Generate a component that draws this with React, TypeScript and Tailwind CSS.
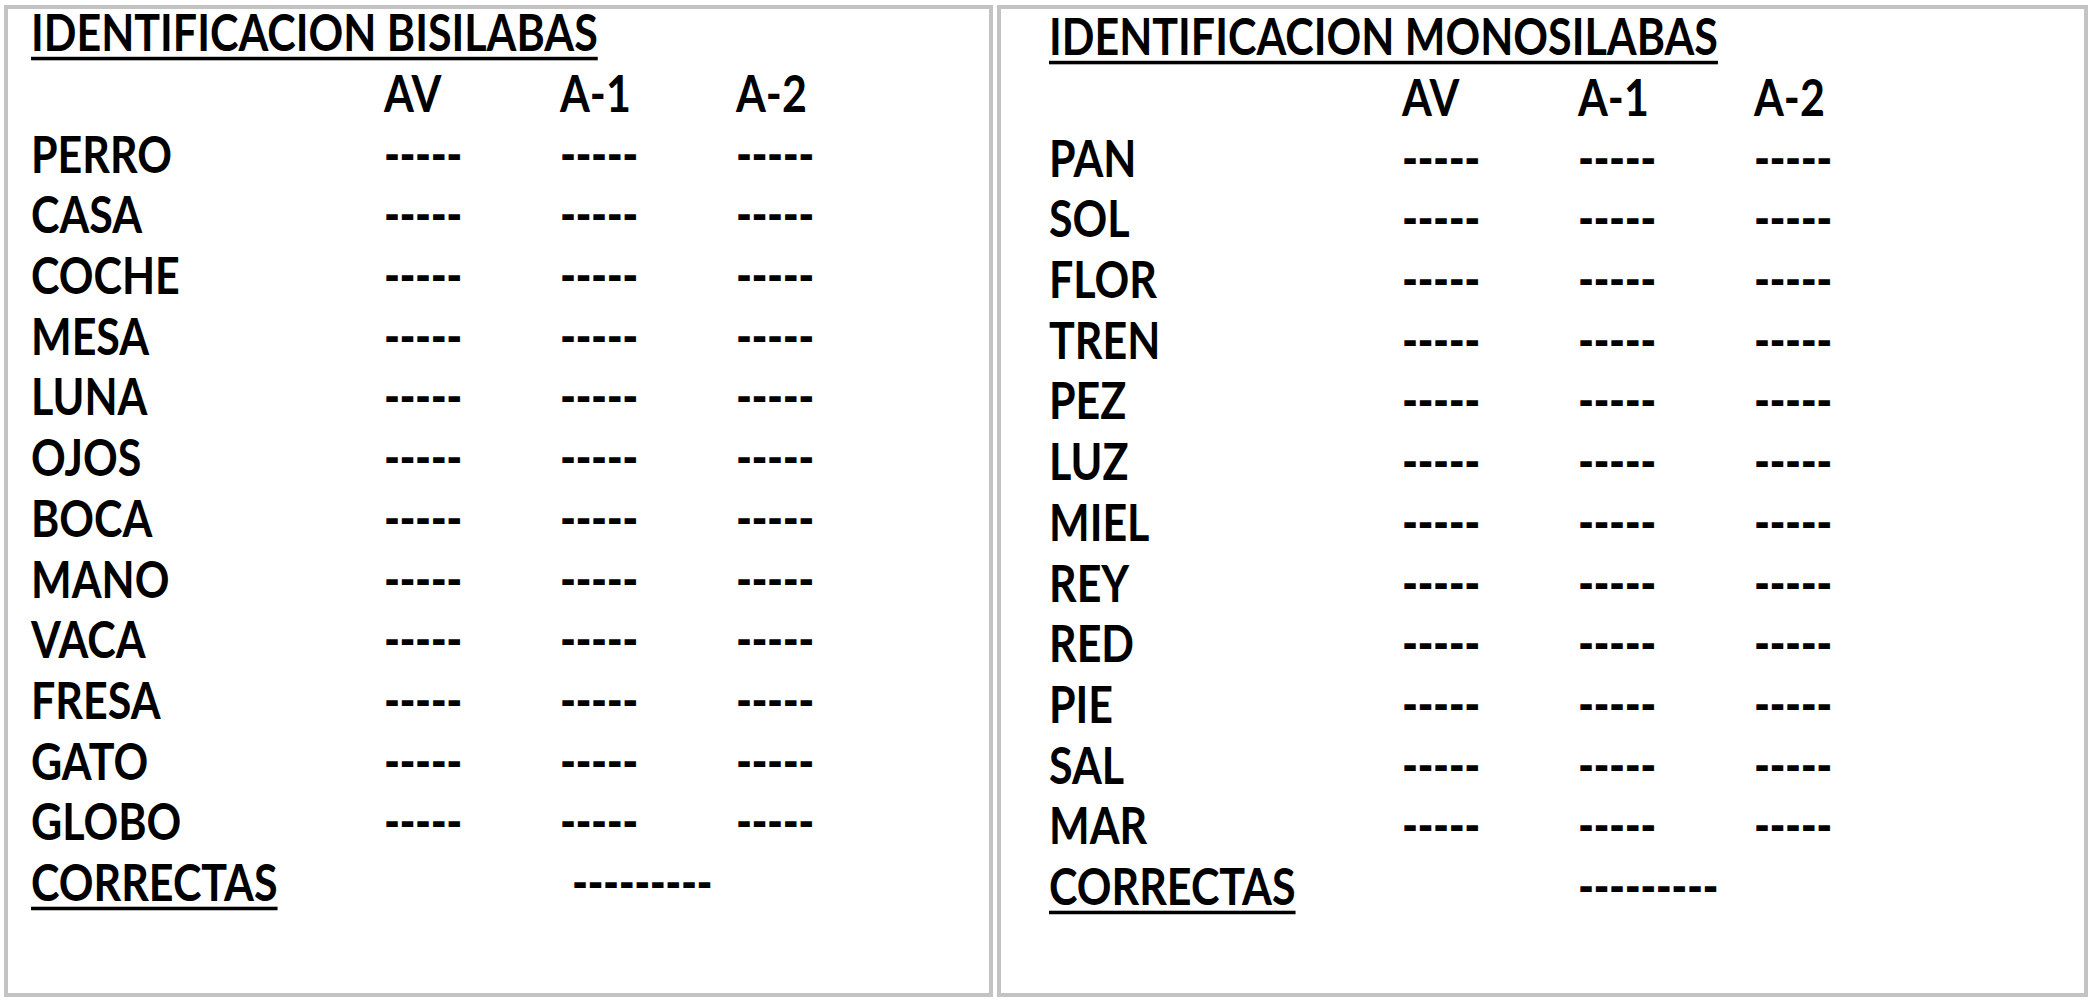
import React from "react";

const left = ["PERRO","CASA","COCHE","MESA","LUNA","OJOS","BOCA","MANO","VACA","FRESA","GATO","GLOBO"];
const right = ["PAN","SOL","FLOR","TREN","PEZ","LUZ","MIEL","REY","RED","PIE","SAL","MAR"];

function T({ children, className = "" }: { children: React.ReactNode; className?: string }) {
  return <span className={`inline-block scale-y-[1.18] origin-center ${className}`}>{children}</span>;
}

function D({ n }: { n: number }) {
  return <T className="font-black tracking-[-0.5px]">{"-".repeat(n)}</T>;
}

function Panel({ title, words, className, corrOffset }: { title: string; words: string[]; className: string; corrOffset: string }) {
  return (
    <div className={`border-4 border-[#c3c3c3] h-[992px] ${className}`}>
      <div className="h-[54px] leading-[46px]">
        <T className="underline decoration-[2.5px] underline-offset-[5px]">{title}</T>
      </div>
      <div className="grid grid-cols-[353px_176px_176px_176px] auto-rows-[60.7px] leading-[60.7px]">
        <div></div>
        <div><T>AV</T></div>
        <div><T>A-1</T></div>
        <div><T>A-2</T></div>
        {words.map((w) => (
          <React.Fragment key={w}>
            <div><T>{w}</T></div>
            <div><D n={5} /></div>
            <div><D n={5} /></div>
            <div><D n={5} /></div>
          </React.Fragment>
        ))}
        <div><T className="underline decoration-[2.5px] underline-offset-[5px]">CORRECTAS</T></div>
        <div className={`col-span-3 ${corrOffset}`}><D n={9} /></div>
      </div>
    </div>
  );
}

export default function App() {
  return (
    <div className="w-[2091px] h-[1004px] bg-white flex gap-[4px] pl-[4px] pt-[5px] text-black font-bold text-[43px] font-['Lato',sans-serif] overflow-hidden">
      <Panel title="IDENTIFICACION BISILABAS" words={left} className="w-[989px] pl-[23px]" corrOffset="pl-[188px]" />
      <Panel title="IDENTIFICACION MONOSILABAS" words={right} className="w-[1091px] pl-[48px] pt-[4px]" corrOffset="pl-[176px]" />
    </div>
  );
}
